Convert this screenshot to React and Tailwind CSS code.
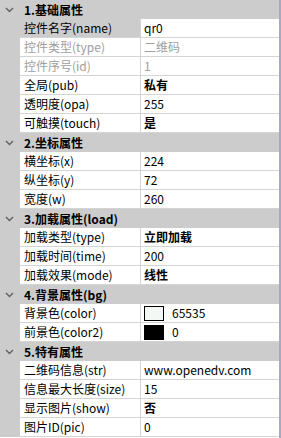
import React from "react";

const sections = [
  {
    title: "1.基础属性",
    rows: [
      { name: "控件名字(name)", value: "qr0", selected: true },
      { name: "控件类型(type)", value: "二维码", disabled: true },
      { name: "控件序号(id)", value: "1", disabled: true },
      { name: "全局(pub)", value: "私有", bold: true },
      { name: "透明度(opa)", value: "255" },
      { name: "可触摸(touch)", value: "是", bold: true },
    ],
  },
  {
    title: "2.坐标属性",
    rows: [
      { name: "横坐标(x)", value: "224" },
      { name: "纵坐标(y)", value: "72" },
      { name: "宽度(w)", value: "260" },
    ],
  },
  {
    title: "3.加载属性(load)",
    rows: [
      { name: "加载类型(type)", value: "立即加载", bold: true },
      { name: "加载时间(time)", value: "200" },
      { name: "加载效果(mode)", value: "线性", bold: true },
    ],
  },
  {
    title: "4.背景属性(bg)",
    rows: [
      { name: "背景色(color)", value: "65535", swatch: "#f4f8f4" },
      { name: "前景色(color2)", value: "0", swatch: "#000000" },
    ],
  },
  {
    title: "5.特有属性",
    rows: [
      { name: "二维码信息(str)", value: "www.openedv.com" },
      { name: "信息最大长度(size)", value: "15" },
      { name: "显示图片(show)", value: "否", bold: true },
      { name: "图片ID(pic)", value: "0" },
    ],
  },
];

function Chevron() {
  return (
    <svg width="9" height="6" viewBox="0 0 9 6" className="text-[#606060]">
      <path d="M1 1 L4.5 4.5 L8 1" fill="none" stroke="currentColor" strokeWidth="1.4" />
    </svg>
  );
}

function Row({ row }) {
  const textColor = row.disabled ? "text-[#a0a0a0]" : "text-[#000000]";
  return (
    <div className="flex h-[19px] bg-[#cccccc]">
      <div className="w-[20px] shrink-0" />
      <div className={`flex w-[120px] shrink-0 items-center border-b border-[#d4d4d4] pl-[4px] ${row.selected ? "bg-[#cccccc]" : "bg-white"} ${textColor}`}>
        {row.name}
      </div>
      <div className="w-px shrink-0 bg-[#d4d4d4]" />
      <div className={`flex flex-1 items-center border-b border-[#d4d4d4] bg-white pl-[3px] ${textColor} ${row.bold ? "font-bold" : ""}`}>
        {row.swatch ? (
          <>
            <span className="mr-[8px] h-[15px] w-[20px] border border-black" style={{ backgroundColor: row.swatch }} />
            <span>{row.value}</span>
          </>
        ) : (
          row.value
        )}
      </div>
    </div>
  );
}

export default function App() {
  return (
    <div
      className="flex h-[438px] w-[281px] overflow-hidden bg-white text-[12px] leading-none"
      style={{ fontFamily: '"Noto Sans CJK SC", "Noto Sans", sans-serif' }}
    >
      <div className="flex-1">
        {sections.map((s) => (
          <div key={s.title}>
            <div className="flex h-[19px] items-center bg-[#cccccc]">
              <div className="flex w-[20px] shrink-0 justify-center pr-[1px]">
                <Chevron />
              </div>
              <span className="pl-[4px] font-bold text-black">{s.title}</span>
            </div>
            {s.rows.map((r) => (
              <Row key={r.name} row={r} />
            ))}
          </div>
        ))}
      </div>
      <div className="w-[2px] shrink-0 bg-[#a8a8c4]" />
    </div>
  );
}
